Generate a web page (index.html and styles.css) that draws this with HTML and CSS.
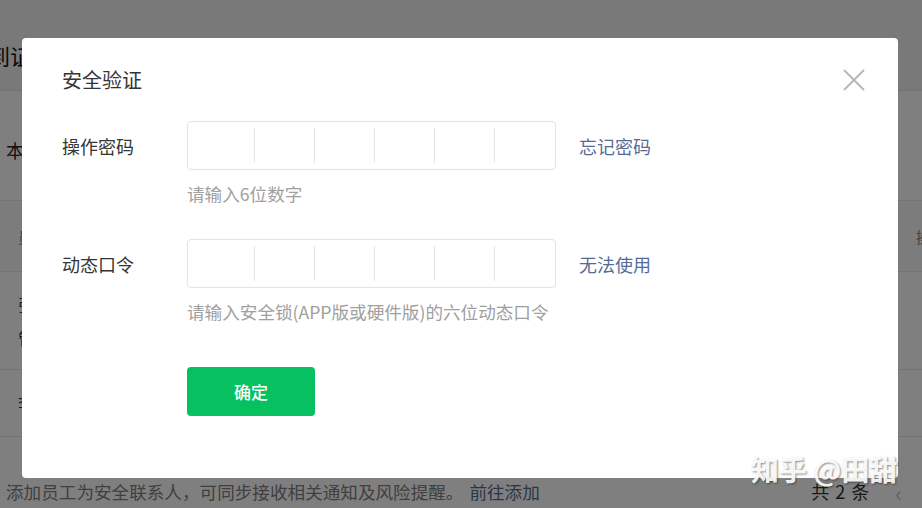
FILE: index.html
```html
<!DOCTYPE html>
<html lang="zh-CN">
<head>
<meta charset="utf-8">
<title>安全验证</title>
<link rel="stylesheet" href="styles.css">
</head>
<body>
<div class="page">
  <div class="page-head"><span class="page-title">到证</span></div>
  <div class="intro">本企业已开启安全验证</div>
  <div class="table">
    <div class="t-head"><span>员工</span><span class="t-right">操作</span></div>
    <div class="t-row tall"><span>张三<br>管理员</span></div>
    <div class="t-row"><span>李四</span></div>
  </div>
  <div class="footer">
    <span class="tip">添加员工为安全联系人，可同步接收相关通知及风险提醒。 <a class="go">前往添加</a></span>
    <span class="count">共 2 条</span>
    <span class="prev">&lsaquo;</span>
  </div>
</div>

<div class="mask">
  <div class="dialog">
    <div class="close" aria-label="关闭">
      <svg width="22" height="22" viewBox="0 0 22 22"><path d="M1 1L21 21M21 1L1 21" stroke="#b8b8b8" stroke-width="2" fill="none"/></svg>
    </div>
    <div class="d-title">安全验证</div>
    <div class="field">
      <div class="f-row">
        <span class="f-label">操作密码</span>
        <div class="code-box">
          <span class="cell"></span><span class="cell"></span><span class="cell"></span>
          <span class="cell"></span><span class="cell"></span><span class="cell"></span>
        </div>
        <a class="f-link">忘记密码</a>
      </div>
      <div class="f-hint">请输入6位数字</div>
    </div>
    <div class="field second">
      <div class="f-row">
        <span class="f-label">动态口令</span>
        <div class="code-box">
          <span class="cell"></span><span class="cell"></span><span class="cell"></span>
          <span class="cell"></span><span class="cell"></span><span class="cell"></span>
        </div>
        <a class="f-link">无法使用</a>
      </div>
      <div class="f-hint">请输入安全锁(APP版或硬件版)的六位动态口令</div>
    </div>
    <div class="actions"><button class="btn-ok">确定</button></div>
  </div>
  <div class="watermark">知乎 @田甜</div>
</div>
</body>
</html>
```

FILE: styles.css
```css
* { box-sizing: border-box; }
html, body { margin: 0; padding: 0; }
body {
  width: 922px;
  height: 508px;
  overflow: hidden;
  font-family: "Noto Sans CJK SC", "Noto Sans", sans-serif;
  color: #353535;
  background: #fff;
  position: relative;
}
.page { display: flex; flex-direction: column; height: 508px; }
.page-head {
  height: 91px;
  background: #f3f3f3;
  border-bottom: 1px solid #e8e8e8;
  display: flex;
  align-items: center;
  padding-top: 20px;
}
.page-title { font-size: 22px; margin-left: -12px; color: #111; }
.intro {
  height: 109px;
  display: flex;
  align-items: center;
  padding-left: 6px;
  font-size: 18px;
  color: #222;
  padding-top: 8px;
}
.t-head {
  height: 72px;
  background: #f8f8f8;
  border-top: 1px solid #e6e6e6;
  border-bottom: 1px solid #e6e6e6;
  display: flex;
  align-items: center;
  justify-content: space-between;
  padding: 0 0 0 18px;
  font-size: 15px;
  color: #888;
}
.t-right { margin-right: -24px; }
.t-row {
  height: 67px;
  border-bottom: 1px solid #e6e6e6;
  display: flex;
  align-items: center;
  padding-left: 18px;
  font-size: 16px;
  color: #333;
}
.t-row.tall { height: 98px; line-height: 34px; }
.footer {
  flex: 1;
  display: flex;
  align-items: flex-end;
  padding: 0 0 4px 6px;
  font-size: 17.6px;
  color: #808080;
}
.tip { flex: 1; }
.go { color: #576b95; margin-left: 2px; }
.count { color: #333; margin-right: 26px; font-size: 18px; word-spacing: 2px; }
.prev { color: #c0c0c0; margin-right: 20px; font-size: 22px; line-height: 24px; }

.mask {
  position: absolute;
  inset: 0;
  background: rgba(0, 0, 0, 0.5);
}
.dialog {
  position: absolute;
  left: 22px;
  top: 38px;
  width: 876px;
  height: 440px;
  background: #fff;
  border-radius: 4px;
  padding: 28px 40px 0 40px;
}
.close {
  position: absolute;
  right: 33px;
  top: 31px;
  width: 22px;
  height: 22px;
  display: flex;
}
.d-title { font-size: 20px; line-height: 28px; color: #353535; }
.field { margin-top: 27px; }
.field.second { margin-top: 33px; }
.f-row { display: flex; align-items: center; }
.f-label { width: 125px; font-size: 18px; color: #353535; }
.code-box {
  width: 369px;
  height: 49px;
  border: 1px solid #e3e3e3;
  border-radius: 4px;
  display: flex;
  padding: 6px 0 6px 6px;
}
.cell { width: 60px; }
.cell + .cell { border-left: 1px solid #e5e5e5; }
.f-link { margin-left: 23px; font-size: 18px; color: #576b95; }
.f-hint {
  margin: 12px 0 0 125px;
  font-size: 17.6px;
  line-height: 24px;
  color: #a0a0a0;
}
.actions { margin: 43px 0 0 125px; }
.btn-ok {
  width: 128px;
  height: 49px;
  border: 0;
  border-radius: 4px;
  background: #07c160;
  color: #fff;
  font-family: inherit;
  font-size: 17px;
  font-weight: 500;
}
.watermark {
  position: absolute;
  left: 751px;
  top: 451px;
  font-size: 28px;
  font-weight: 700;
  line-height: 36px;
  color: rgba(255, 255, 255, 0.92);
  text-shadow: 1px 1px 2px rgba(0, 0, 0, 0.45);
}
```
